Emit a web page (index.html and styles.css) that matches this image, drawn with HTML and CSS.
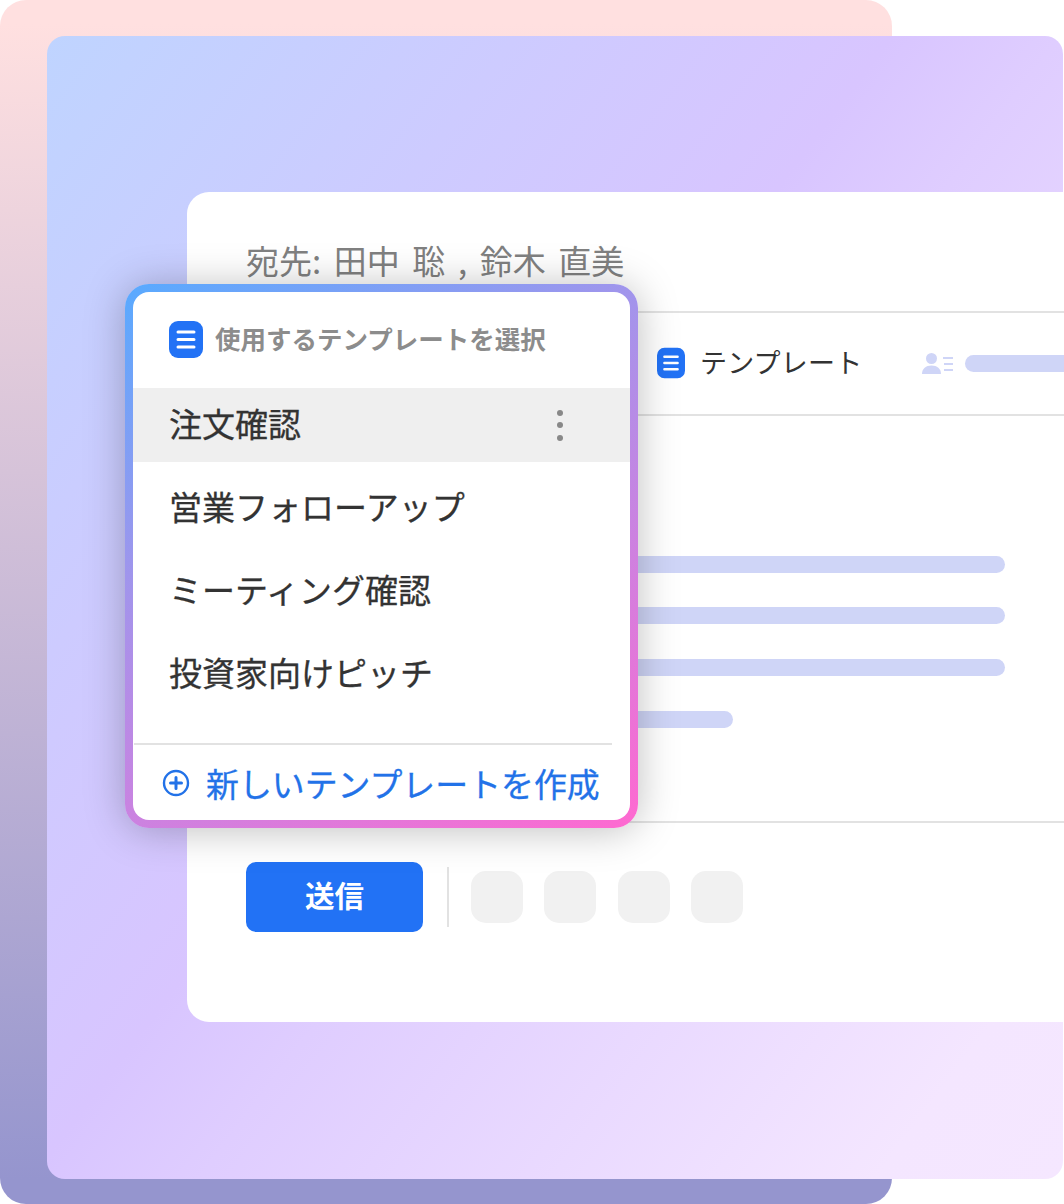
FILE: index.html
```html
<!DOCTYPE html>
<html lang="ja">
<head>
<meta charset="utf-8">
<title>テンプレート</title>
<link rel="stylesheet" href="styles.css">
</head>
<body>
<div class="stage">
  <div class="back-panel">
    <div class="front-panel">
      <section class="card">
        <div class="to-row">宛先: 田中 聡 , 鈴木 直美</div>
        <div class="toolbar">
          <svg class="tpl-icon tpl-small" viewBox="0 0 34 37"><rect width="34" height="37" rx="9" fill="#2272f5"/><path d="M9 11h16M9 18.500h16M9 26h16" stroke="#fff" stroke-width="3" stroke-linecap="round"/></svg>
          <span class="toolbar-label">テンプレート</span>
          <svg class="person-icon" viewBox="0 0 32 21"><circle cx="9.500" cy="5.500" r="5.500" fill="#cfd5f7"/><path d="M0 21c0-5.500 4-8.500 9.500-8.500S19 15.500 19 21z" fill="#cfd5f7"/><path d="M21 5h10M22 11h9M22 17h9" stroke="#cfd5f7" stroke-width="2"/></svg>
          <span class="toolbar-pill"></span>
        </div>
        <div class="body">
          <span class="bar"></span>
          <span class="bar"></span>
          <span class="bar"></span>
          <span class="bar bar-short"></span>
        </div>
        <div class="footer">
          <button class="send">送信</button>
          <span class="sep"></span>
          <div class="tools">
            <span class="tool"></span>
            <span class="tool"></span>
            <span class="tool"></span>
            <span class="tool"></span>
          </div>
        </div>
      </section>
    </div>
  </div>

  <div class="menu">
    <div class="menu-inner">
      <div class="menu-head">
        <svg class="tpl-icon" viewBox="0 0 34 37"><rect width="34" height="37" rx="9" fill="#2272f5"/><path d="M9 11h16M9 18.500h16M9 26h16" stroke="#fff" stroke-width="3" stroke-linecap="round"/></svg>
        <span class="menu-title">使用するテンプレートを選択</span>
      </div>
      <ul class="menu-list">
        <li class="menu-item is-active">注文確認<span class="dots"><i></i><i></i><i></i></span></li>
        <li class="menu-item">営業フォローアップ</li>
        <li class="menu-item">ミーティング確認</li>
        <li class="menu-item">投資家向けピッチ</li>
      </ul>
      <div class="menu-foot">
        <svg class="plus" viewBox="0 0 28 28"><circle cx="14" cy="14" r="12" fill="none" stroke="#2272e8" stroke-width="2.400"/><path d="M8.500 14h11M14 8.500v11" stroke="#2272e8" stroke-width="3" stroke-linecap="round"/></svg>
        <span>新しいテンプレートを作成</span>
      </div>
    </div>
  </div>
</div>
</body>
</html>
```
FILE: styles.css
```css
* { box-sizing: border-box; }
html, body { margin: 0; padding: 0; background: #fff; }
body { font-family: "Noto Sans CJK JP", "Noto Sans", sans-serif; overflow: hidden; }

.stage { position: relative; width: 1064px; height: 1204px; overflow: hidden; }

.back-panel {
  width: 892px;
  height: 1204px;
  padding: 36px 0 0 47px;
  border-radius: 26px;
  background: linear-gradient(180deg, #ffe0e0 2%, #9595ce 98%);
}

.front-panel {
  width: 1016px;
  height: 1143px;
  padding: 156px 0 0 140px;
  border-radius: 18px;
  background: linear-gradient(127deg, #bfd4ff 0%, #cdcbff 25%, #d8c5ff 45%, #dfcdff 54%, #f4e6ff 90%, #f5e7ff 100%);
}

.card {
  width: 877px;
  height: 830px;
  padding-left: 59px;
  border-radius: 22px 0 0 22px;
  background: #fff;
}

.to-row {
  height: 121px;
  padding-top: 44px;
  border-bottom: 2px solid #e2e2e2;
  font-size: 33px;
  line-height: 48px;
  word-spacing: 5.200px;
  color: #808080;
}

.toolbar {
  display: flex;
  align-items: center;
  height: 103px;
  padding-left: 411px;
  border-bottom: 2px solid #e2e2e2;
}
.tpl-icon { display: block; width: 34px; height: 37px; flex: none; }
.tpl-small { width: 28px; height: 32px; margin-top: -2px; }
.toolbar-label { margin: -4px 0 0 15px; font-size: 27px; line-height: 40px; letter-spacing: .2px; color: #333; white-space: nowrap; }
.person-icon { width: 32px; height: 21px; margin: 0 11px 0 60px; flex: none; }
.toolbar-pill { width: 99px; height: 17px; flex: none; border-radius: 9px 0 0 9px; background: #cfd5f7; }

.body {
  display: flex;
  flex-direction: column;
  gap: 34.700px;
  height: 407px;
  padding-top: 139.600px;
  border-bottom: 2px solid #e2e2e2;
}
.bar { display: block; flex: none; width: 759px; height: 17px; border-radius: 9px; background: #cfd5f7; }
.bar-short { width: 487px; }

.footer { display: flex; align-items: center; padding-top: 39px; }
.send {
  width: 177px;
  height: 70px;
  padding: 0 0 4px;
  border: 0;
  border-radius: 10px;
  background: #2272f5;
  color: #fff;
  font: 700 29.500px/1 "Noto Sans CJK JP", sans-serif;
}
.sep { width: 2px; height: 60px; margin: 0 22px 0 24px; background: #e2e2e2; }
.tools { display: flex; gap: 21.300px; }
.tool { width: 52px; height: 52px; border-radius: 15px; background: #f1f1f1; }

.menu {
  position: absolute;
  left: 125px;
  top: 284px;
  width: 513px;
  height: 544px;
  padding: 8px;
  border-radius: 24px;
  background: linear-gradient(150deg, #58aaff 0%, #a095ec 35%, #cc82e0 65%, #ff69d0 100%);
  box-shadow: 0 2px 40px rgba(0, 0, 0, .26);
}
.menu-inner { height: 528px; border-radius: 16px; background: #fff; overflow: hidden; }

.menu-head {
  display: flex;
  align-items: center;
  gap: 12px;
  height: 96px;
  padding: 0 0 1px 36px;
  font-size: 25.500px;
  font-weight: 700;
  color: #8c8c8c;
}
.menu-title { margin-top: -5px; }

.menu-list { display: flex; flex-direction: column; gap: 9px; margin: 0; padding: 0; list-style: none; }
.menu-item {
  display: flex;
  align-items: center;
  justify-content: space-between;
  height: 74px;
  padding: 0 67px 5px 36px;
  font-size: 33px;
  color: #333;
  -webkit-text-stroke: .3px #333;
}
.is-active { background: #efefef; }
.dots { display: flex; flex-direction: column; gap: 6.500px; margin-top: 5px; }
.dots i { display: block; width: 6px; height: 6px; border-radius: 50%; background: #888; }

.menu-foot {
  display: flex;
  align-items: center;
  gap: 16px;
  height: 77px;
  margin: 32px 18px 0 1px;
  padding-left: 28px;
  border-top: 2px solid #e2e2e2;
  font-size: 32.900px;
  color: #2272e8;
  -webkit-text-stroke: .3px #2272e8;
  white-space: nowrap;
}
.plus { width: 28px; height: 28px; flex: none; }
```
